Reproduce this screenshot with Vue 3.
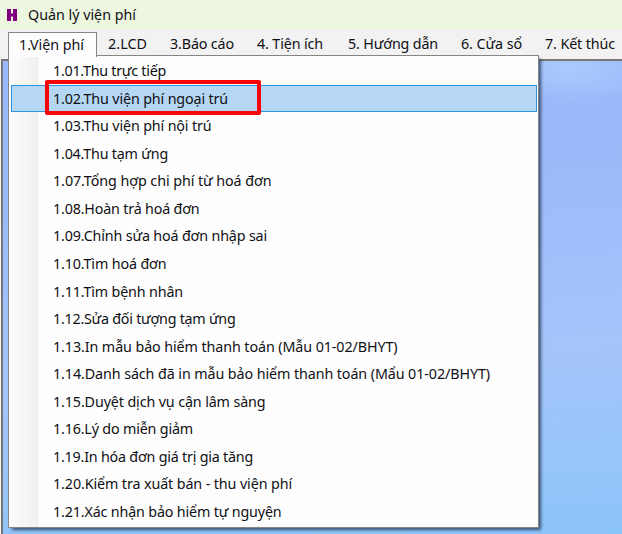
<script setup>
const menus = [
  { label: '1.Viện phí', width: 89, text: 65 },
  { label: '2.LCD', width: 62, text: 39 },
  { label: '3.Báo cáo', width: 87, text: 64 },
  { label: '4. Tiện ích', width: 91, text: 66 },
  { label: '5. Hướng dẫn', width: 113, text: 90 },
  { label: '6. Cửa sổ', width: 84, text: 61 },
  { label: '7. Kết thúc', width: 94, text: 70 },
]
const items = [
  { label: '1.01.Thu trực tiếp', text: 113 },
  { label: '1.02.Thu viện phí ngoại trú', text: 175 },
  { label: '1.03.Thu viện phí nội trú', text: 158.5 },
  { label: '1.04.Thu tạm ứng', text: 115 },
  { label: '1.07.Tổng hợp chi phí từ hoá đơn', text: 218.5 },
  { label: '1.08.Hoàn trả hoá đơn', text: 146.5 },
  { label: '1.09.Chỉnh sửa hoá đơn nhập sai', text: 214 },
  { label: '1.10.Tìm hoá đơn', text: 113.5 },
  { label: '1.11.Tìm bệnh nhân', text: 130 },
  { label: '1.12.Sửa đối tượng tạm ứng', text: 182.5 },
  { label: '1.13.In mẫu bảo hiểm thanh toán (Mẫu 01-02/BHYT)', text: 344.5 },
  { label: '1.14.Danh sách đã in mẫu bảo hiểm thanh toán (Mẩu 01-02/BHYT)', text: 437 },
  { label: '1.15.Duyệt dịch vụ cận lâm sàng', text: 212.5 },
  { label: '1.16.Lý do miễn giảm', text: 140 },
  { label: '1.19.In hóa đơn giá trị gia tăng', text: 200 },
  { label: '1.20.Kiểm tra xuất bán - thu viện phí', text: 239 },
  { label: '1.21.Xác nhận bảo hiểm tự nguyện', text: 228.5 },
]

// Spreads a label's letters evenly so that it fills the given width.
const vFit = {
  mounted(el, { value }) {
    const natural = el.getBoundingClientRect().width
    const count = el.textContent.length
    el.style.letterSpacing = (value - natural) / count + 'px'
  },
}
</script>

<template>
  <div class="window">
    <header class="titlebar">
      <svg class="logo" viewBox="0 0 11 12" aria-hidden="true">
        <path d="M0 0H4V4.6H6V0H10V12H6V7.4H4V12H0Z" />
      </svg>
      <span v-fit="108" class="title">Quản lý viện phí</span>
    </header>
    <nav class="menubar">
      <div
        v-for="(m, i) in menus"
        :key="m.label"
        class="menu"
        :class="{ open: i === 0 }"
        :style="{ width: m.width + 'px' }"
      ><span v-fit="m.text">{{ m.label }}</span></div>
    </nav>
    <main class="workspace"></main>
    <div class="dropdown">
      <div v-for="(item, i) in items" :key="item.label" class="item" :class="{ active: i === 1 }">
        <span v-fit="item.text">{{ item.label }}</span>
        <div v-if="i === 1" class="marker"></div>
      </div>
    </div>
  </div>
</template>

<style>
body {
  margin: 0;
  overflow: hidden;
}
</style>

<style scoped>
.window {
  position: relative;
  box-sizing: border-box;
  width: 622px;
  height: 534px;
  display: flex;
  flex-direction: column;
  overflow: hidden;
  background: #f3f3f3;
  color: #101014;
  font-family: "Noto Sans", "Open Sans", sans-serif;
  font-size: 14.3px;
}
.titlebar {
  height: 29px;
  flex: none;
  display: flex;
  align-items: center;
  padding-left: 7px;
  background: #edf7df;
}
.logo {
  width: 11px;
  height: 12px;
  fill: #800080;
}
.title {
  margin-left: 10px;
  white-space: nowrap;
}
.menubar {
  height: 30px;
  flex: none;
  display: flex;
  padding-left: 7px;
  background: #f2f2f2;
}
.menu {
  box-sizing: border-box;
  flex: none;
  height: 25px;
  margin-top: 2px;
  padding-left: 11px;
  line-height: 25px;
  white-space: nowrap;
}
.menu.open {
  position: relative;
  z-index: 1;
  margin-left: 1px;
  margin-top: 3px;
  padding-left: 10px;
  line-height: 23px;
  border: 1px solid #858585;
  border-bottom: 0;
  background: #fdfdfd;
}
.workspace {
  flex: 1;
  margin-left: 1px;
  border-top: 2px solid #777;
  border-left: 2px solid #777;
  background:
    radial-gradient(ellipse 90px 32px at 565px 8px, rgba(176, 210, 253, 0.7), transparent),
    linear-gradient(176deg, #9cb9fb 0%, #9cbafa 28%, #a5c4fa 62%, #98c5f8 84%, #8bc4fa 100%);
}
.dropdown {
  position: absolute;
  box-sizing: border-box;
  left: 8px;
  top: 55px;
  width: 531px;
  height: 473px;
  padding: 1px 1px 0 2px;
  border: 1px solid #858585;
  background: linear-gradient(90deg, #fcfcfc 0, #f0f0f0 29px, #fdfdfd 30px);
  box-shadow: 3px 3px 3px -1px rgba(30, 45, 75, 0.75);
}
.item {
  position: relative;
  box-sizing: border-box;
  height: 27.57px;
  padding-left: 42px;
  line-height: 27.4px;
  white-space: nowrap;
}
.item.active {
  background: #b5d7f3;
  box-shadow: inset 0 0 0 1px #3195dd;
}
.marker {
  position: absolute;
  box-sizing: border-box;
  left: 34px;
  top: -5px;
  width: 216px;
  height: 35px;
  border: 4px solid #fb0207;
  border-radius: 2px;
}
</style>
